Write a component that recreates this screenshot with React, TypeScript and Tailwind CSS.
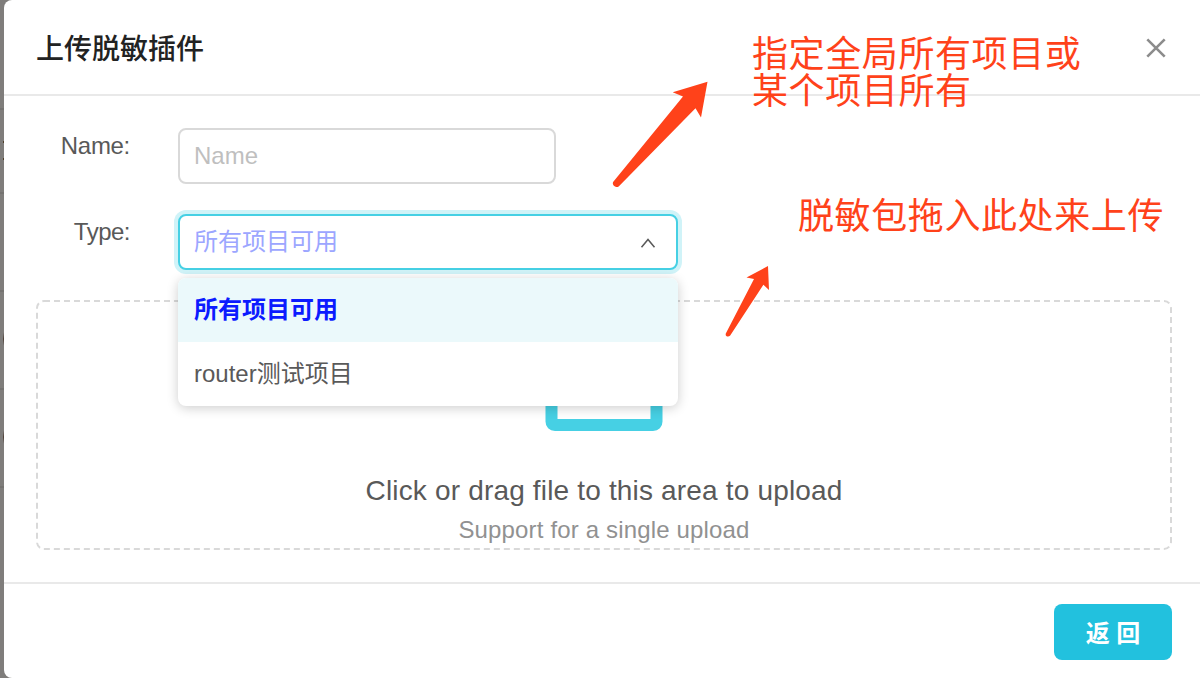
import React from "react";

const options = ["所有项目可用", "router测试项目"];

function Backdrop() {
  return (
    <svg className="h-[678px] w-1 shrink-0" viewBox="0 0 4 678" aria-hidden="true">
      <rect width="4" height="678" fill="#7f7d7b" />
      {[108, 192, 290, 388, 486].map((y) => (
        <rect key={y} y={y} width="4" height="2" fill="#757371" />
      ))}
      <path d="M3 141h1v2h-1zM3 158h1v2h-1z" fill="#4d3d28" />
      <path d="M4 332.500Q2.500 339 4 345.500zM4 430.500Q2.500 437 4 443.500z" fill="#3d2a20" />
    </svg>
  );
}

function TypeSelect() {
  return (
    <div className="relative w-[500px]">
      <div className="flex h-14 items-center justify-between rounded-lg border-2 border-[#46d0e4] bg-white pr-5 pl-3.5 shadow-[0_0_0_4px_#d0f3f8]">
        <span className="text-[24px] leading-9 text-[#9ca6ff]">{options[0]}</span>
        <svg className="mt-0.5 h-4 w-4" viewBox="0 0 16 16" fill="none" stroke="#595959" strokeWidth="1.5">
          <path d="M1.500 12.300 8 4.400l6.500 7.900" />
        </svg>
      </div>
      <ul className="absolute top-16 left-0 z-10 w-[500px] overflow-hidden rounded-lg bg-white shadow-[0_2px_12px_rgba(0,0,0,0.2)]">
        <li className="flex h-16 items-center bg-[#ebf9fb] px-4 text-[24px] leading-9 font-semibold text-[#0b1bff]">
          {options[0]}
        </li>
        <li className="flex h-16 items-center px-4 text-[24px] leading-9 text-[#595959]">
          {options[1]}
        </li>
      </ul>
    </div>
  );
}

function Annotations() {
  return (
    <>
      <p className="pointer-events-none absolute top-9 left-[752px] z-20 text-[36px] leading-[37px] font-normal tracking-[0.6px] whitespace-nowrap text-[#ff421a]">
        指定全局所有项目或
        <br />
        某个项目所有
      </p>
      <p className="pointer-events-none absolute top-[198px] left-[798px] z-20 text-[36px] leading-[37px] font-normal tracking-[0.6px] whitespace-nowrap text-[#ff421a]">
        脱敏包拖入此处来上传
      </p>
      <svg
        className="pointer-events-none absolute top-[76px] left-[600px] z-20"
        width="180"
        height="270"
        viewBox="600 76 180 270"
        fill="#ff421a"
        aria-hidden="true"
      >
        <path d="M707.500 81.700 672.700 92.200 683 96.500 613.300 181.800C611.600 184.400 614.700 188.300 618.700 186.400L695.500 108.300 701 117.500Z" />
        <path d="M768 266 746.500 277.500 754 279 725.800 333.500C725 336.500 728.300 337.500 730.200 335.600L763.400 284.700 769 290Z" />
      </svg>
    </>
  );
}

export default function App() {
  return (
    <div className="relative flex h-[678px] w-[1200px] overflow-hidden bg-[#7f7d7b] font-['Liberation_Sans','Noto_Sans_CJK_SC',sans-serif]">
      <Backdrop />
      <main className="flex min-w-0 flex-1 flex-col rounded-l-lg bg-white">
        <header className="flex h-24 items-center justify-between border-b-2 border-[#e9e9e9] pr-[34px] pl-8">
          <h1 className="pt-[5px] text-[28px] leading-10 font-medium text-[#222]">上传脱敏插件</h1>
          <button className="pt-0.5" aria-label="Close">
            <svg width="20" height="20" viewBox="0 0 20 20" fill="none" stroke="#8c8c8c" strokeWidth="2.600">
              <path d="m1.300 1.300 17.400 17.400M18.700 1.300 1.300 18.700" />
            </svg>
          </button>
        </header>

        <section className="flex flex-1 flex-col pt-8 pr-7 pl-8">
          <div className="flex h-14">
            <label className="w-[94px] pt-0.5 text-right text-[24px] leading-8 tracking-[-0.3px] text-[#595959]">Name:</label>
            <input
              className="ml-12 h-14 w-[378px] rounded-lg border-2 border-[#d9d9d9] px-3.5 text-[24px] text-[#595959] outline-none placeholder:text-[#bfbfbf]"
              placeholder="Name"
            />
          </div>
          <div className="mt-[30px] flex h-14">
            <label className="w-[94px] pt-0.5 text-right text-[24px] leading-8 tracking-[-0.5px] text-[#595959]">Type:</label>
            <div className="ml-12">
              <TypeSelect />
            </div>
          </div>
          <div className="relative mt-[30px] flex h-[250px] w-[1136px] flex-col items-center pt-[34px]">
            <svg className="absolute inset-0" width="1136" height="250" fill="none" aria-hidden="true">
              <rect x="1" y="1" width="1134" height="248" rx="7" stroke="#d9d9d9" strokeWidth="2" strokeDasharray="6 4" />
            </svg>
            <svg width="118" height="97" viewBox="0 0 118 97" fill="none" aria-hidden="true">
              <path d="M6.500 40v47.500q0 3.500 3.500 3.500h98q3.500 0 3.500-3.500V40" stroke="#46d0e4" strokeWidth="12" />
            </svg>
            <p className="mt-10 text-[28px] leading-10 tracking-[0.170px] text-[#595959]">
              Click or drag file to this area to upload
            </p>
            <p className="mt-px text-[24px] leading-9 tracking-[0.160px] text-[#919191]">Support for a single upload</p>
          </div>
        </section>

        <footer className="flex h-24 items-start justify-end border-t-2 border-[#e9e9e9] pt-5 pr-7">
          <button className="h-14 w-[118px] rounded-lg bg-[#22c1de] pt-[3px] text-[24px] leading-9 font-bold text-white">
            返 回
          </button>
        </footer>
      </main>
      <Annotations />
    </div>
  );
}
